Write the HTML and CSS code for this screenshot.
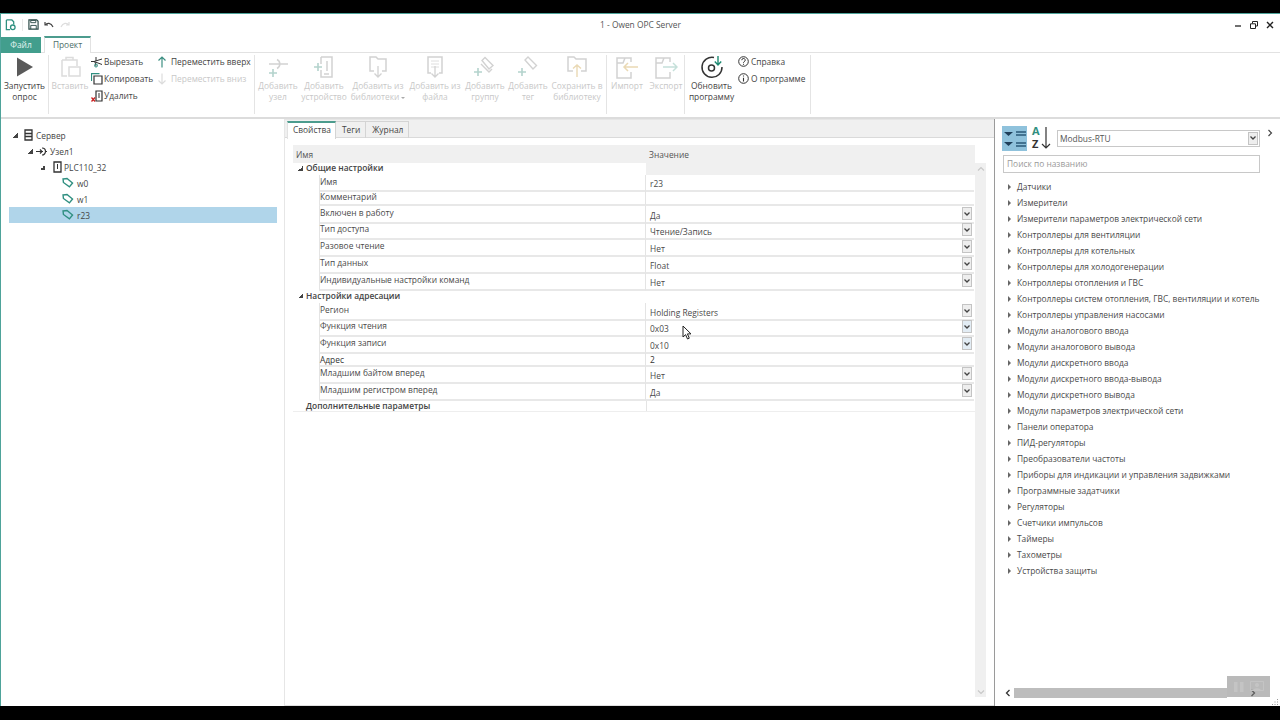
FILE: index.html
```html
<!DOCTYPE html>
<html lang="ru">
<head>
    <meta charset="UTF-8">
    <title>1 - Owen OPC Server</title>
    <link rel="stylesheet" href="styles.css">
</head>
<body>
    <svg class="defs" width="0" height="0">
        <symbol id="tag" viewBox="0 0 12 12"><path d="M1.500 1.500h4l5 5-3.500 3.500-5.500-5z" fill="none" stroke="#2f8f80" stroke-width="1.400" transform="rotate(-6 6 6)"/></symbol>
        <symbol id="chev" viewBox="0 0 8 8"><path d="M1.500 2.500 4 5l2.500-2.500" fill="none" stroke="#444" stroke-width="1.300"/></symbol>
        <symbol id="plus" viewBox="0 0 8 8"><path d="M4 0v8M0 4h8" stroke="#b4d3cd" stroke-width="1.600"/></symbol>
    </svg>

    <div class="window">
        <header class="titlebar">
            <div class="qat">
                <svg width="11" height="12" viewBox="0 0 12 13"><path d="M1.500 1h6l2 2v3M1.500 1v10.500h4" fill="none" stroke="#2f9080" stroke-width="1.400"/><circle cx="8.500" cy="9" r="2.500" fill="none" stroke="#2f9080" stroke-width="1.400"/></svg>
                <span class="qat-sep"></span>
                <svg width="11" height="11" viewBox="0 0 12 12"><path d="M1 1h8.500L11 2.500V11H1z" fill="none" stroke="#2b4a47" stroke-width="1.300"/><path d="M3 1.500h5.500v2.500H3zM3 11V7h6v4" fill="none" stroke="#2b4a47"/></svg>
                <svg width="10" height="8" viewBox="0 0 10 8"><path d="M1 1v3h3M1.300 4C3 1.500 7 1.500 9 6" fill="none" stroke="#444" stroke-width="1.200"/></svg>
                <svg class="redo" width="10" height="8" viewBox="0 0 10 8"><path d="M9 1v3H6M8.700 4C7 1.500 3 1.500 1 6" fill="none" stroke="#ddd" stroke-width="1.200"/></svg>
            </div>
            <div class="title">1 - Owen OPC Server</div>
            <div class="win-controls">
                <svg width="8" height="8" viewBox="0 0 8 8"><path d="M1 5h6" stroke="#222" stroke-width="1.300"/></svg>
                <svg width="8" height="8" viewBox="0 0 8 8"><path d="M.5 2.800h5v4.700h-5zM2.500 2.500V.5h5v4.500h-2" fill="none" stroke="#222"/></svg>
                <svg width="8" height="8" viewBox="0 0 8 8"><path d="M1 1l6 6M7 1 1 7" stroke="#222" stroke-width="1.400"/></svg>
            </div>
        </header>

        <nav class="ribbon-tabs">
            <a class="rtab rtab-file">Файл</a>
            <a class="rtab rtab-active">Проект</a>
        </nav>

        <section class="ribbon">
            <div class="group group-run">
                <button class="big">
                    <svg width="24" height="24" viewBox="0 0 24 24"><path d="M4 2.500 20 12 4 21.500z" fill="#5a5a5a"/></svg>
                    <span>Запустить<br>опрос</span>
                </button>
            </div>

            <div class="group group-edit">
                <button class="big off">
                    <svg width="24" height="24" viewBox="0 0 24 24"><path d="M4 5h15v6M9 21H4V5M8 5V2.500h7V5" fill="none" stroke="#dcdcdc" stroke-width="1.500"/><path d="M11 12h11v9H11z" fill="none" stroke="#dcdcdc" stroke-width="1.500"/></svg>
                    <span>Вставить</span>
                </button>
                <div class="small-col col-edit">
                    <a class="small"><svg width="12" height="12" viewBox="0 0 12 12"><path d="M0 5.500h3l8 3M3 5.500l8-2.500M5 1v4M4 6l1 4" fill="none" stroke="#333"/><circle cx="5" cy="9.500" r="1.500" fill="none" stroke="#2f8f80"/></svg>Вырезать</a>
                    <a class="small"><svg width="12" height="12" viewBox="0 0 12 12"><path d="M.5 8V.7h8" fill="none" stroke="#2f8f80" stroke-width="1.200"/><path d="M3 3h8v8H3z" fill="none" stroke="#333" stroke-width="1.200"/></svg>Копировать</a>
                    <a class="small"><svg width="12" height="12" viewBox="0 0 12 12"><path d="M5 1h6v10H5z" fill="none" stroke="#333" stroke-width="1.200"/><path d="M8 3v5" stroke="#333"/><path d="M.5 7.500l3.500 4M4 7.500l-3.500 4" stroke="#c22" stroke-width="1.300"/></svg>Удалить</a>
                </div>
                <div class="small-col col-move">
                    <a class="small"><svg width="10" height="12" viewBox="0 0 10 12"><path d="M5 11.500V1M1.500 4.500 5 1l3.500 3.500" fill="none" stroke="#3c8f82" stroke-width="1.200"/></svg>Переместить вверх</a>
                    <a class="small off"><svg width="10" height="12" viewBox="0 0 10 12"><path d="M5 .5V11M1.500 7.500 5 11l3.500-3.500" fill="none" stroke="#dcdcdc" stroke-width="1.200"/></svg>Переместить вниз</a>
                </div>
            </div>

            <div class="group group-add">
                <button class="big off">
                    <svg width="24" height="24" viewBox="0 0 24 24"><path d="M3 9h13M11 4.500a5 5 0 0 1 0 9M16 9h6" fill="none" stroke="#d2d2d2" stroke-width="1.500"/><use href="#plus" x="3" y="14" width="8" height="8"/></svg>
                    <span>Добавить<br>узел</span>
                </button>
                <button class="big off">
                    <svg width="24" height="24" viewBox="0 0 24 24"><path d="M9 2h11v20H9v-7M9 9V2" fill="none" stroke="#d2d2d2" stroke-width="1.500"/><path d="M15 6v10M12 19h5" stroke="#d2d2d2" stroke-width="1.500"/><use href="#plus" x="2" y="8" width="8" height="8"/></svg>
                    <span>Добавить<br>устройство</span>
                </button>
                <button class="big off">
                    <svg width="24" height="24" viewBox="0 0 24 24"><path d="M8 16H4V2h6l2 2h8v12h-4" fill="none" stroke="#d2d2d2" stroke-width="1.500"/><path d="M12 11v11M8.500 18.500 12 22l3.500-3.500" fill="none" stroke="#d2d2d2" stroke-width="1.300"/></svg>
                    <span>Добавить из<br>библиотеки<i class="caret"></i></span>
                </button>
                <button class="big off">
                    <svg width="24" height="24" viewBox="0 0 24 24"><path d="M8 18H5V2h14v16h-3" fill="none" stroke="#d2d2d2" stroke-width="1.500"/><path d="M8 6h8M8 9h8M8 12h8" stroke="#dedede"/><path d="M12 11v11M8.500 18.500 12 22l3.500-3.500" fill="none" stroke="#d2d2d2" stroke-width="1.300"/></svg>
                    <span>Добавить из<br>файла</span>
                </button>
                <button class="big off">
                    <svg width="24" height="24" viewBox="0 0 24 24"><path d="M9 5.500 12 2.500l8 8-4 3.500z" fill="none" stroke="#d2d2d2" stroke-width="1.400"/><path d="M8 9l8 8 3-3" fill="none" stroke="#d2d2d2" stroke-width="1.400"/><use href="#plus" x="1" y="13" width="8" height="8"/></svg>
                    <span>Добавить<br>группу</span>
                </button>
                <button class="big off">
                    <svg width="24" height="24" viewBox="0 0 24 24"><path d="M9 5 12 2l8.500 8.500L17 14z" fill="none" stroke="#d2d2d2" stroke-width="1.400"/><use href="#plus" x="2" y="13" width="8" height="8"/></svg>
                    <span>Добавить<br>тег</span>
                </button>
                <button class="big off">
                    <svg width="24" height="24" viewBox="0 0 24 24"><path d="M8 16H3V2h6l2 2h10v12h-5" fill="none" stroke="#d2d2d2" stroke-width="1.500"/><path d="M12 22V10M8 13.500 12 10l4 3.500" fill="none" stroke="#ead9b4" stroke-width="1.400"/></svg>
                    <span>Сохранить в<br>библиотеку</span>
                </button>
            </div>

            <div class="group group-io">
                <button class="big off">
                    <svg width="24" height="24" viewBox="0 0 24 24"><path d="M16 7V3H2v20h14v-6M2 8h6l2-5" fill="none" stroke="#d2d2d2" stroke-width="1.500"/><path d="M23 12H9M13 8l-4 4 4 4" fill="none" stroke="#ead9b4" stroke-width="1.500"/></svg>
                    <span>Импорт</span>
                </button>
                <button class="big off">
                    <svg width="24" height="24" viewBox="0 0 24 24"><path d="M16 7V3H2v20h14v-6M2 8h6l2-5" fill="none" stroke="#d2d2d2" stroke-width="1.500"/><path d="M9 12h14M19 8l4 4-4 4" fill="none" stroke="#c5e0da" stroke-width="1.500"/></svg>
                    <span>Экспорт</span>
                </button>
            </div>

            <div class="group group-help">
                <button class="big">
                    <svg width="24" height="24" viewBox="0 0 24 24"><path d="M14 2.500A10 10 0 1 0 22 12" fill="none" stroke="#333" stroke-width="1.500"/><circle cx="11.500" cy="13" r="3" fill="none" stroke="#333" stroke-width="1.500"/><path d="M18 1v9M14.800 6.500 18 10l3.200-3.500" fill="none" stroke="#1e8a72" stroke-width="1.400"/></svg>
                    <span>Обновить<br>программу</span>
                </button>
                <div class="small-col col-help">
                    <a class="small"><svg width="11" height="11" viewBox="0 0 11 11"><circle cx="5.500" cy="5.500" r="4.800" fill="none" stroke="#333"/><path d="M3.800 4.200a1.700 1.700 0 1 1 2.400 1.500c-.6.300-.7.600-.7 1.200M5.500 7.800v1" fill="none" stroke="#333"/></svg>Справка</a>
                    <a class="small"><svg width="11" height="11" viewBox="0 0 11 11"><circle cx="5.500" cy="5.500" r="4.800" fill="none" stroke="#333"/><path d="M5.500 2.500v1M5.500 4.800v3.700" stroke="#333" stroke-width="1.100"/></svg>О программе</a>
                </div>
            </div>
        </section>

        <main class="workspace">
            <aside class="tree-pane">
                <ul class="tree">
                    <li class="node lvl-0"><i class="exp"></i><svg width="9" height="12" viewBox="0 0 9 12"><path d="M1 1h7v10H1zM1 4.500h7M1 7.500h7" fill="none" stroke="#333" stroke-width="1.300"/></svg>Сервер</li>
                    <li class="node lvl-1"><i class="exp"></i><svg width="11" height="11" viewBox="0 0 11 11"><path d="M0 5.500h7M6 2a3.500 3.500 0 0 1 0 7M4 3.500l2 2-2 2M9 5.500h2" fill="none" stroke="#333" stroke-width="1.200"/></svg>Узел1</li>
                    <li class="node lvl-2"><i class="exp"></i><svg width="9" height="12" viewBox="0 0 9 12"><path d="M1 1h7v10H1z" fill="none" stroke="#333" stroke-width="1.300"/><path d="M4.500 3v5" stroke="#333"/></svg>PLC110_32</li>
                    <li class="node lvl-3"><svg width="12" height="12"><use href="#tag"/></svg>w0</li>
                    <li class="node lvl-3"><svg width="12" height="12"><use href="#tag"/></svg>w1</li>
                    <li class="node lvl-3 selected"><svg width="12" height="12"><use href="#tag"/></svg>r23</li>
                </ul>
            </aside>

            <section class="center-pane">
                <div class="doc-tabs">
                    <a class="dtab dtab-active">Свойства</a>
                    <a class="dtab">Теги</a>
                    <a class="dtab">Журнал</a>
                </div>
                <div class="doc-body">
                    <div class="grid-head"><span>Имя</span><span>Значение</span></div>
                    <div class="grid-wrap">
                        <div class="props">
                            <div class="group-row g-first"><i class="exp"></i><b>Общие настройки</b></div>
                            <div class="row h15"><div class="name">Имя</div><div class="val">r23</div></div>
                            <div class="row h16"><div class="name">Комментарий</div><div class="val"></div></div>
                            <div class="row h16"><div class="name">Включен в работу</div><div class="val">Да<i class="combo"><svg width="8" height="8"><use href="#chev"/></svg></i></div></div>
                            <div class="row"><div class="name">Тип доступа</div><div class="val">Чтение/Запись<i class="combo"><svg width="8" height="8"><use href="#chev"/></svg></i></div></div>
                            <div class="row"><div class="name">Разовое чтение</div><div class="val">Нет<i class="combo"><svg width="8" height="8"><use href="#chev"/></svg></i></div></div>
                            <div class="row"><div class="name">Тип данных</div><div class="val">Float<i class="combo"><svg width="8" height="8"><use href="#chev"/></svg></i></div></div>
                            <div class="row"><div class="name">Индивидуальные настройки команд</div><div class="val">Нет<i class="combo"><svg width="8" height="8"><use href="#chev"/></svg></i></div></div>
                            <div class="group-row"><i class="exp"></i><b>Настройки адресации</b></div>
                            <div class="row h16"><div class="name">Регион</div><div class="val">Holding Registers<i class="combo"><svg width="8" height="8"><use href="#chev"/></svg></i></div></div>
                            <div class="row"><div class="name">Функция чтения</div><div class="val">0x03<i class="combo hot"><svg width="8" height="8"><use href="#chev"/></svg></i></div></div>
                            <div class="row"><div class="name">Функция записи</div><div class="val">0x10<i class="combo hot"><svg width="8" height="8"><use href="#chev"/></svg></i></div></div>
                            <div class="row h13"><div class="name">Адрес</div><div class="val">2</div></div>
                            <div class="row"><div class="name">Младшим байтом вперед</div><div class="val">Нет<i class="combo"><svg width="8" height="8"><use href="#chev"/></svg></i></div></div>
                            <div class="row h16"><div class="name">Младшим регистром вперед</div><div class="val">Да<i class="combo"><svg width="8" height="8"><use href="#chev"/></svg></i></div></div>
                            <div class="group-row g-last"><i class="exp none"></i><b>Дополнительные параметры</b></div>
                        </div>
                        <div class="vscroll">
                            <svg width="8" height="8" viewBox="0 0 8 8"><path d="M1 5.500 4 2.500l3 3" fill="none" stroke="#c8c8c8" stroke-width="1.200"/></svg>
                            <svg width="8" height="8" viewBox="0 0 8 8"><path d="M1 2.500 4 5.500l3-3" fill="none" stroke="#c8c8c8" stroke-width="1.200"/></svg>
                        </div>
                    </div>
                </div>
            </section>

            <aside class="lib-pane">
                <div class="lib-tools">
                    <span class="sort-cat">
                        <svg width="26" height="26" viewBox="0 0 26 26"><path d="M2 6h9l-4.500 4zM2 16h9l-4.500 4z" fill="#1f3f5a"/><path d="M14 6h10M14 9h10M14 17h10M14 20h10" stroke="#2b5a78" stroke-width="1.300"/></svg>
                    </span>
                    <svg class="sort-az" width="20" height="24" viewBox="0 0 20 24"><text x="0" y="9" class="az-a">A</text><text x="0" y="22" class="az-z">Z</text><path d="M14 1v21M10 18l4 4 4-4" fill="none" stroke="#333" stroke-width="1.200"/></svg>
                    <div class="lib-combo">Modbus-RTU<i class="combo"><svg width="8" height="8"><use href="#chev"/></svg></i></div>
                    <svg class="collapse" width="6" height="8" viewBox="0 0 6 8"><path d="M1.500 1 4.500 4l-3 3" fill="none" stroke="#444" stroke-width="1.200"/></svg>
                </div>
                <div class="search">Поиск по названию</div>
                <ul class="lib-list">
                    <li>Датчики</li>
                    <li>Измерители</li>
                    <li>Измерители параметров электрической сети</li>
                    <li>Контроллеры для вентиляции</li>
                    <li>Контроллеры для котельных</li>
                    <li>Контроллеры для холодогенерации</li>
                    <li>Контроллеры отопления и ГВС</li>
                    <li>Контроллеры систем отопления, ГВС, вентиляции и котель</li>
                    <li>Контроллеры управления насосами</li>
                    <li>Модули аналогового ввода</li>
                    <li>Модули аналогового вывода</li>
                    <li>Модули дискретного ввода</li>
                    <li>Модули дискретного ввода-вывода</li>
                    <li>Модули дискретного вывода</li>
                    <li>Модули параметров электрической сети</li>
                    <li>Панели оператора</li>
                    <li>ПИД-регуляторы</li>
                    <li>Преобразователи частоты</li>
                    <li>Приборы для индикации и управления задвижками</li>
                    <li>Программные задатчики</li>
                    <li>Регуляторы</li>
                    <li>Счетчики импульсов</li>
                    <li>Таймеры</li>
                    <li>Тахометры</li>
                    <li>Устройства защиты</li>
                </ul>
                <div class="hscroll">
                    <svg width="6" height="8" viewBox="0 0 6 8"><path d="M4.500 1 1.500 4l3 3" fill="none" stroke="#333" stroke-width="1.300"/></svg>
                    <div class="thumb"></div>
                    <svg width="6" height="8" viewBox="0 0 6 8"><path d="M1.500 1 4.500 4l-3 3" fill="none" stroke="#333" stroke-width="1.300"/></svg>
                </div>
            </aside>
        </main>

        <!-- плеер поверх окна -->
        <div class="player">
            <svg width="14" height="12" viewBox="0 0 14 12"><path d="M2 1h3.500v10H2zM8 1h3.500v10H8z" fill="#c4c4c4"/></svg>
            <svg width="16" height="12" viewBox="0 0 16 12"><path d="M.5.500h13v9h-13z" fill="none" stroke="#c4c4c4"/><circle cx="7" cy="4" r="2" fill="#c4c4c4"/><path d="M3 9.500c.5-3 7.500-3 8 0z" fill="#c4c4c4"/></svg>
        </div>
        <svg class="cursor" width="10" height="15" viewBox="0 0 10 15"><path d="M1 1v11l2.600-2.400L5.500 14l1.800-.8-1.900-4.300H9z" fill="#fff" stroke="#222"/></svg>
        <svg class="grip" width="8" height="8" viewBox="0 0 8 8"><path d="M6 1h1v1H6zM3.500 3.500h1v1h-1zM6 3.500h1v1H6zM1 6h1v1H1zM3.500 6h1v1h-1zM6 6h1v1H6z" fill="#999"/></svg>
    </div>
</body>
</html>
```

FILE: styles.css
```css
* {
    box-sizing: border-box;
}

html, body {
    margin: 0;
    height: 720px;
    overflow: hidden;
}

body {
    background: #000;
    padding-top: 13px;
    font-family: "Open Sans", "Noto Sans", sans-serif;
    font-size: 8.4px;
    color: #444;
}

svg {
    display: block;
    flex: none;
}

.defs {
    position: absolute;
}

ul {
    list-style: none;
    margin: 0;
    padding: 0;
}

i {
    font-style: normal;
}

/* окно */
.window {
    position: relative;
    height: 693px;
    background: #fff;
    border-top: 1px solid #4ea39a;
    border-left: 1px solid #4ea39a;
    display: flex;
    flex-direction: column;
}

.titlebar {
    height: 23px;
    flex: none;
    display: flex;
    align-items: center;
    justify-content: space-between;
    position: relative;
}

.qat {
    display: flex;
    align-items: center;
    padding-left: 4px;
    gap: 5px;
    margin-top: -2px;
}

.qat-sep {
    width: 1px;
    height: 12px;
    background: #e8e8e8;
    margin: 0 0 0 1px;
}

.qat .redo {
    margin-left: 1px;
}

.title {
    position: absolute;
    left: 0;
    right: 0;
    top: 5px;
    text-align: center;
    color: #555;
}

.win-controls {
    display: flex;
    gap: 8px;
    padding-right: 6px;
    margin-top: -1px;
}

/* вкладки ленты */
.ribbon-tabs {
    height: 16px;
    flex: none;
    display: flex;
    gap: 3px;
    border-bottom: 1px solid #e2e2e2;
}

.rtab {
    height: 16px;
    line-height: 15px;
    text-align: center;
}

.rtab-file {
    width: 40px;
    background: #429e8d;
    color: #e6f4f1;
}

.rtab-active {
    width: 47px;
    margin-top: -1px;
    height: 17px;
    background: #fff;
    border: 1px solid #e2e2e2;
    border-top: 2px solid #4c9c8e;
    border-bottom: none;
    color: #4f6f6a;
    line-height: 14px;
}

/* лента */
.ribbon {
    height: 66px;
    flex: none;
    display: flex;
    border-bottom: 2px solid #dcdcdc;
}

.group {
    display: flex;
    height: 59px;
    margin-top: 2px;
    border-right: 1px solid #e4e4e4;
}

.group-run {
    width: 48px;
}

.group-edit {
    width: 206px;
}

.group-add {
    width: 352px;
    display: grid;
    grid-template-columns: 46px 46px 62px 52px 48px 38px 60px;
}

.group-io {
    width: 78px;
    display: grid;
    grid-template-columns: 40px 38px;
}

.group-help {
    width: 126px;
}

.big {
    all: unset;
    box-sizing: border-box;
    width: 100%;
    display: flex;
    flex-direction: column;
    align-items: center;
    text-align: center;
    line-height: 11px;
    font-size: 8.4px;
    color: #444;
    white-space: nowrap;
}

.big span {
    margin-top: 1px;
}

.big.off, .small.off {
    color: #c8c8c8;
}

.group-edit .big {
    width: 42px;
    flex: none;
}

.group-help .big {
    width: 53px;
    flex: none;
}

.caret {
    display: inline-block;
    margin-left: 2px;
    vertical-align: middle;
    border: 2px solid transparent;
    border-top-color: #aaa;
    border-bottom: none;
}

.small-col {
    display: flex;
    flex-direction: column;
    margin-top: -2px;
}

.small {
    height: 17px;
    display: flex;
    align-items: center;
    gap: 1px;
    white-space: nowrap;
    color: #444;
}

.col-edit {
    width: 68px;
}

.col-move {
    margin-left: -2px;
}

.col-move .small {
    gap: 4px;
}

.col-help .small {
    gap: 2px;
}

/* рабочая область */
.workspace {
    flex: 1;
    display: flex;
    min-height: 0;
}

.tree-pane {
    width: 284px;
    flex: none;
    padding: 8px 8px 0 8px;
    border-right: 1px solid #e6e6e6;
}

.node {
    height: 16px;
    display: flex;
    align-items: center;
    gap: 3px;
    width: 268px;
    color: #444;
}

.lvl-0 { padding-left: 4px; }
.lvl-1 { padding-left: 19px; }
.lvl-2 { padding-left: 31px; }
.lvl-3 { padding-left: 53px; }

.lvl-0 svg { margin-left: 3px; }
.lvl-2 svg { margin: 0 -1px 0 5px; }

.selected {
    background: #b0d5ea;
}

.exp {
    width: 5px;
    height: 5px;
    flex: none;
    background: linear-gradient(135deg, transparent 50%, #444 50%);
}

.exp.none {
    background: none;
}

.center-pane {
    width: 710px;
    flex: none;
    display: flex;
    flex-direction: column;
    border-right: 1px solid #9a9a9a;
}

.doc-tabs {
    height: 19px;
    flex: none;
    background: #f0f0f0;
    display: flex;
    padding: 1px 0 0 2px;
    border-top: 1px solid #e6e6e6;
    border-bottom: 1px solid #dadada;
}

.dtab {
    height: 17px;
    padding: 0 5px 0 6px;
    line-height: 15px;
    border: 1px solid #d4d4d4;
    border-bottom: none;
    border-left: none;
    color: #444;
}

.dtab-active {
    width: 49px;
    padding: 0 0 0 5px;
    background: #fff;
    border-top: 2px solid #4c9c8e;
    border-left: 1px solid #e2e2e2;
    height: 18px;
    line-height: 14px;
}

.doc-body {
    flex: 1;
    padding: 7px 8px 8px 8px;
    display: flex;
    flex-direction: column;
    border-bottom: 1px solid #e0e0e0;
    min-height: 0;
}

.grid-head {
    height: 18px;
    width: 682px;
    flex: none;
    background: #f0f0f0;
    display: grid;
    grid-template-columns: 353px 326px;
    align-items: center;
    padding-left: 3px;
    color: #555;
}

.grid-wrap {
    flex: 1;
    display: flex;
    min-height: 0;
}

.props {
    width: 682px;
    flex: none;
}

.row {
    height: 17px;
    display: grid;
    grid-template-columns: 327px 328px;
    margin-left: 26px;
}

.h13 { height: 13px; }
.h15 { height: 15px; }
.h16 { height: 16px; }

.name {
    border-left: 1px solid #e4e4e4;
    border-right: 1px solid #e4e4e4;
    border-bottom: 2px solid #e8e8e8;
    line-height: 13px;
    white-space: nowrap;
    color: #4a4a4a;
}

.val {
    position: relative;
    border-bottom: 2px solid #e8e8e8;
    padding: 3px 0 0 4px;
    line-height: 13px;
    color: #4a4a4a;
}

.h15 .val {
    padding-top: 2px;
}

.h13 .name, .h13 .val {
    padding-top: 1px;
    line-height: 11px;
    color: #333;
}

.group-row {
    height: 13px;
    display: flex;
    align-items: center;
    padding-left: 5px;
    gap: 3px;
    line-height: 12px;
    color: #444;
    border-bottom: 2px solid transparent;
}

.g-first {
    height: 12px;
    background: linear-gradient(90deg, transparent 353px, #f0f0f0 353px);
}

.g-last {
    background: linear-gradient(90deg, transparent 353px, #e4e4e4 353px, #e4e4e4 354px, transparent 354px);
    height: 13px;
    padding-top: 1px;
    border-bottom: 1px solid #eee;
}

.group-row b {
    font-weight: 600;
}

.combo {
    position: absolute;
    right: 2px;
    top: 1px;
    width: 10px;
    height: 13px;
    background: #eee;
    border: 1px solid #c4c4c4;
    display: flex;
    align-items: center;
    justify-content: center;
}

.combo.hot {
    background: #e2ecf4;
}

.vscroll {
    width: 11px;
    flex: none;
    background: #f0f0f0;
    display: flex;
    flex-direction: column;
    justify-content: space-between;
    align-items: center;
    padding: 2px 0 1px;
}

/* библиотека */
.lib-pane {
    flex: 1;
    min-width: 0;
    position: relative;
    padding: 6px 0 0 7px;
    overflow: hidden;
}

.lib-tools {
    display: flex;
    align-items: center;
    height: 26px;
}

.sort-cat {
    width: 25px;
    height: 25px;
    background: #8fc2dc;
    flex: none;
}

.sort-az {
    margin-left: 5px;
    overflow: visible;
}

.az-a, .az-z {
    font-family: "Open Sans", sans-serif;
    font-size: 11px;
    font-weight: 700;
}

.az-a {
    fill: #2f8f80;
}

.az-z {
    fill: #333;
}

.lib-combo {
    position: relative;
    margin-left: 5px;
    width: 203px;
    height: 17px;
    border: 1px solid #c8c8c8;
    line-height: 15px;
    padding-left: 2px;
    color: #555;
}

.lib-combo .combo {
    right: 1px;
    top: 1px;
    height: 13px;
}

.collapse {
    margin-left: 7px;
    margin-top: -10px;
}

.search {
    width: 257px;
    height: 18px;
    margin: 4px 0 0 1px;
    border: 1px solid #c8c8c8;
    line-height: 16px;
    padding-left: 3px;
    color: #999;
}

.lib-list {
    margin-top: 6px;
    width: 264px;
}

.lib-list li {
    height: 16px;
    line-height: 16px;
    padding-left: 15px;
    white-space: nowrap;
    position: relative;
    color: #4a4a4a;
}

.lib-list li::before {
    content: "";
    position: absolute;
    left: 6px;
    top: 5px;
    border: 3px solid transparent;
    border-left: 3px solid #666;
    border-right: none;
}

.hscroll {
    position: absolute;
    left: 10px;
    right: 8px;
    top: 569px;
    height: 10px;
    display: flex;
    align-items: center;
}

.thumb {
    width: 213px;
    height: 10px;
    background: #bdbdbd;
    margin-left: 3px;
    margin-right: 23px;
}

/* поверх окна */
.player {
    position: absolute;
    left: 1226px;
    top: 662px;
    width: 43px;
    height: 21px;
    background: rgba(130, 130, 130, 0.55);
    display: flex;
    align-items: center;
    justify-content: center;
    gap: 4px;
}

.cursor {
    position: absolute;
    left: 681px;
    top: 311px;
}

.grip {
    position: absolute;
    right: 1px;
    bottom: 0;
}
```
